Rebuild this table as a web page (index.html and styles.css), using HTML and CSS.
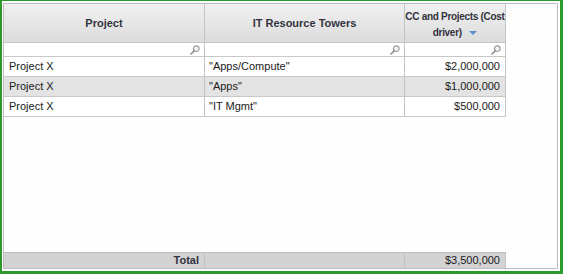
FILE: index.html
```html
<!DOCTYPE html>
<html>

<head>
    <link rel="stylesheet" href="styles.css">
</head>

<body>
    <div class="frame">
        <div class="grid">
            <!-- column headers -->
            <div class="row head">
                <div class="cell">Project</div>
                <div class="cell">IT Resource Towers</div>
                <div class="cell sorted">CC and Projects (Cost<br>driver) <span class="sort-arrow"></span></div>
            </div>

            <!-- filter inputs -->
            <div class="row filter">
                <div class="cell"><svg class="lens" width="10" height="10" viewBox="0 0 10 10"><circle cx="6.3" cy="3.7" r="2.8" fill="#f4f4f4" stroke="#9a9a9a" stroke-width="1.2" /><line x1="4.3" y1="5.7" x2="1" y2="9" stroke="#8a8a8a" stroke-width="1.6" stroke-linecap="round" /></svg></div>
                <div class="cell"><svg class="lens" width="10" height="10" viewBox="0 0 10 10"><circle cx="6.3" cy="3.7" r="2.8" fill="#f4f4f4" stroke="#9a9a9a" stroke-width="1.2" /><line x1="4.3" y1="5.7" x2="1" y2="9" stroke="#8a8a8a" stroke-width="1.6" stroke-linecap="round" /></svg></div>
                <div class="cell"><svg class="lens" width="10" height="10" viewBox="0 0 10 10"><circle cx="6.3" cy="3.7" r="2.8" fill="#f4f4f4" stroke="#9a9a9a" stroke-width="1.2" /><line x1="4.3" y1="5.7" x2="1" y2="9" stroke="#8a8a8a" stroke-width="1.6" stroke-linecap="round" /></svg></div>
            </div>

            <!-- data rows -->
            <div class="row data">
                <div class="cell">Project X</div>
                <div class="cell">"Apps/Compute"</div>
                <div class="cell num">$2,000,000</div>
            </div>
            <div class="row data alt">
                <div class="cell">Project X</div>
                <div class="cell">"Apps"</div>
                <div class="cell num">$1,000,000</div>
            </div>
            <div class="row data">
                <div class="cell">Project X</div>
                <div class="cell">"IT Mgmt"</div>
                <div class="cell num">$500,000</div>
            </div>

            <div class="spacer"></div>

            <!-- summary -->
            <div class="row total">
                <div class="cell num label">Total</div>
                <div class="cell"></div>
                <div class="cell num">$3,500,000</div>
            </div>
        </div>
    </div>
</body>

</html>
```

FILE: styles.css
```css
* {
    margin: 0;
    padding: 0;
    box-sizing: border-box;
}

body {
    font-family: "Liberation Sans", Arial, sans-serif;
    font-size: 11px;
    color: #1a1a1a;
    background: #ffffff;
}

/* green outline round the whole widget */
.frame {
    width: 563px;
    height: 274px;
    border-style: solid;
    border-color: #2b9a2b;
    border-width: 1px 3px 3px 2px;
    padding: 2px 2px 2px 1px;
    background: #ffffff;
}

.grid {
    height: 100%;
    border: 1px solid #bdbdbd;
    display: flex;
    flex-direction: column;
    background: #fefefe;
}

.row {
    display: grid;
    grid-template-columns: 201px 200px 101px;
}

.cell {
    border-right: 1px solid #c4c4c4;
    border-bottom: 1px solid #c8c8c8;
    white-space: nowrap;
    overflow: hidden;
}

/* header */
.head .cell {
    height: 39px;
    background: linear-gradient(#f0f0f0, #dcdcdc);
    border-bottom-color: #c6c6c6;
    font-weight: bold;
    color: #333340;
    display: flex;
    align-items: center;
    justify-content: center;
    text-align: center;
}

.head .sorted {
    display: block;
    line-height: 16px;
    padding-top: 5px;
    font-size: 10px;
    letter-spacing: -0.3px;
}

.sort-arrow {
    display: inline-block;
    width: 0;
    height: 0;
    margin-left: 5px;
    vertical-align: 1px;
    border-left: 4px solid transparent;
    border-right: 4px solid transparent;
    border-top: 4px solid #5d8fcc;
}

/* filter row */
.filter .cell {
    height: 14px;
    background: #ffffff;
    display: flex;
    justify-content: flex-end;
    align-items: center;
    padding-right: 4px;
}

.lens {
    display: block;
}

/* body rows */
.data .cell {
    height: 20px;
    line-height: 19px;
    padding-left: 5px;
    background: #ffffff;
}

.data .cell + .cell {
    padding-left: 4px;
}

.data.alt .cell {
    background: #e3e3e3;
}

.num {
    text-align: right;
    padding-right: 5px;
}

.data .num {
    padding-left: 0;
}

.spacer {
    flex: 1;
}

/* totals bar */
.total .cell {
    height: 16px;
    line-height: 15px;
    background: #d3d3d3;
    border-top: 1px solid #bcbcbc;
    border-bottom: none;
    border-right-color: #c0c0c0;
}

.total .label {
    font-weight: bold;
    color: #333340;
    padding-right: 5px;
}
```
